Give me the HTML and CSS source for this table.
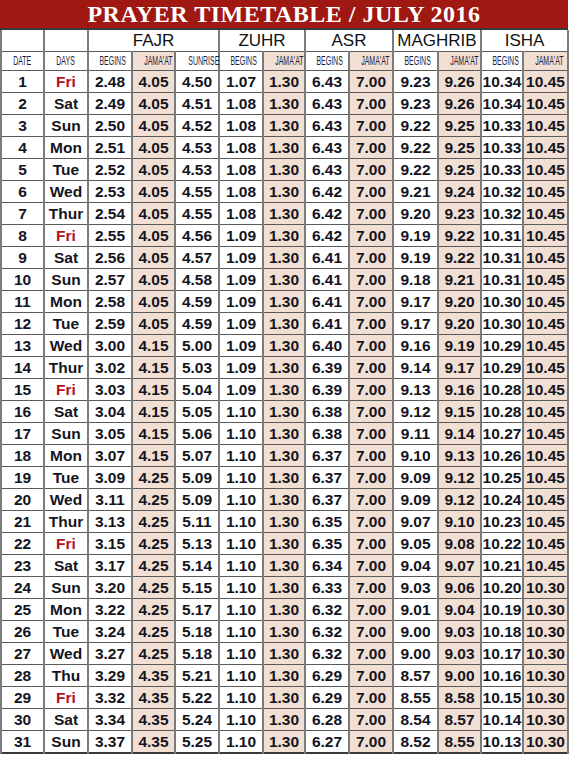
FILE: index.html
```html
<!DOCTYPE html>
<html lang="en">
<head>
<meta charset="utf-8">
<title>Prayer Timetable July 2016</title>
<link rel="stylesheet" href="styles.css">
</head>
<body>
<div class="sheet">
  <h1 class="title">PRAYER TIMETABLE / JULY 2016</h1>
  <table class="times">
    <colgroup>
      <col class="c43"><col class="c44"><col class="c44"><col class="c43"><col class="c44"><col class="c44"><col class="c42"><col class="c44"><col class="c44"><col class="c45"><col class="c43"><col class="c42"><col class="c45">
    </colgroup>
    <thead>
      <tr class="group">
        <th></th><th></th>
        <th colspan="3">FAJR</th>
        <th colspan="2">ZUHR</th>
        <th colspan="2">ASR</th>
        <th colspan="2">MAGHRIB</th>
        <th colspan="2">ISHA</th>
      </tr>
      <tr class="sub">
        <th><span>DATE</span></th>
        <th><span>DAYS</span></th>
        <th><span>BEGINS</span></th>
        <th class="j"><span>JAMA'AT</span></th>
        <th><span>SUNRISE</span></th>
        <th><span>BEGINS</span></th>
        <th class="j"><span>JAMA'AT</span></th>
        <th><span>BEGINS</span></th>
        <th class="j"><span>JAMA'AT</span></th>
        <th><span>BEGINS</span></th>
        <th class="j"><span>JAMA'AT</span></th>
        <th><span>BEGINS</span></th>
        <th class="j"><span>JAMA'AT</span></th>
      </tr>
    </thead>
    <tbody>
      <tr><td>1</td><td class="fri">Fri</td><td>2.48</td><td class="j">4.05</td><td>4.50</td><td>1.07</td><td class="j">1.30</td><td>6.43</td><td class="j">7.00</td><td>9.23</td><td class="j">9.26</td><td>10.34</td><td class="j">10.45</td></tr>
      <tr><td>2</td><td>Sat</td><td>2.49</td><td class="j">4.05</td><td>4.51</td><td>1.08</td><td class="j">1.30</td><td>6.43</td><td class="j">7.00</td><td>9.23</td><td class="j">9.26</td><td>10.34</td><td class="j">10.45</td></tr>
      <tr><td>3</td><td>Sun</td><td>2.50</td><td class="j">4.05</td><td>4.52</td><td>1.08</td><td class="j">1.30</td><td>6.43</td><td class="j">7.00</td><td>9.22</td><td class="j">9.25</td><td>10.33</td><td class="j">10.45</td></tr>
      <tr><td>4</td><td>Mon</td><td>2.51</td><td class="j">4.05</td><td>4.53</td><td>1.08</td><td class="j">1.30</td><td>6.43</td><td class="j">7.00</td><td>9.22</td><td class="j">9.25</td><td>10.33</td><td class="j">10.45</td></tr>
      <tr><td>5</td><td>Tue</td><td>2.52</td><td class="j">4.05</td><td>4.53</td><td>1.08</td><td class="j">1.30</td><td>6.43</td><td class="j">7.00</td><td>9.22</td><td class="j">9.25</td><td>10.33</td><td class="j">10.45</td></tr>
      <tr><td>6</td><td>Wed</td><td>2.53</td><td class="j">4.05</td><td>4.55</td><td>1.08</td><td class="j">1.30</td><td>6.42</td><td class="j">7.00</td><td>9.21</td><td class="j">9.24</td><td>10.32</td><td class="j">10.45</td></tr>
      <tr><td>7</td><td>Thur</td><td>2.54</td><td class="j">4.05</td><td>4.55</td><td>1.08</td><td class="j">1.30</td><td>6.42</td><td class="j">7.00</td><td>9.20</td><td class="j">9.23</td><td>10.32</td><td class="j">10.45</td></tr>
      <tr><td>8</td><td class="fri">Fri</td><td>2.55</td><td class="j">4.05</td><td>4.56</td><td>1.09</td><td class="j">1.30</td><td>6.42</td><td class="j">7.00</td><td>9.19</td><td class="j">9.22</td><td>10.31</td><td class="j">10.45</td></tr>
      <tr><td>9</td><td>Sat</td><td>2.56</td><td class="j">4.05</td><td>4.57</td><td>1.09</td><td class="j">1.30</td><td>6.41</td><td class="j">7.00</td><td>9.19</td><td class="j">9.22</td><td>10.31</td><td class="j">10.45</td></tr>
      <tr><td>10</td><td>Sun</td><td>2.57</td><td class="j">4.05</td><td>4.58</td><td>1.09</td><td class="j">1.30</td><td>6.41</td><td class="j">7.00</td><td>9.18</td><td class="j">9.21</td><td>10.31</td><td class="j">10.45</td></tr>
      <tr><td>11</td><td>Mon</td><td>2.58</td><td class="j">4.05</td><td>4.59</td><td>1.09</td><td class="j">1.30</td><td>6.41</td><td class="j">7.00</td><td>9.17</td><td class="j">9.20</td><td>10.30</td><td class="j">10.45</td></tr>
      <tr><td>12</td><td>Tue</td><td>2.59</td><td class="j">4.05</td><td>4.59</td><td>1.09</td><td class="j">1.30</td><td>6.41</td><td class="j">7.00</td><td>9.17</td><td class="j">9.20</td><td>10.30</td><td class="j">10.45</td></tr>
      <tr><td>13</td><td>Wed</td><td>3.00</td><td class="j">4.15</td><td>5.00</td><td>1.09</td><td class="j">1.30</td><td>6.40</td><td class="j">7.00</td><td>9.16</td><td class="j">9.19</td><td>10.29</td><td class="j">10.45</td></tr>
      <tr><td>14</td><td>Thur</td><td>3.02</td><td class="j">4.15</td><td>5.03</td><td>1.09</td><td class="j">1.30</td><td>6.39</td><td class="j">7.00</td><td>9.14</td><td class="j">9.17</td><td>10.29</td><td class="j">10.45</td></tr>
      <tr><td>15</td><td class="fri">Fri</td><td>3.03</td><td class="j">4.15</td><td>5.04</td><td>1.09</td><td class="j">1.30</td><td>6.39</td><td class="j">7.00</td><td>9.13</td><td class="j">9.16</td><td>10.28</td><td class="j">10.45</td></tr>
      <tr><td>16</td><td>Sat</td><td>3.04</td><td class="j">4.15</td><td>5.05</td><td>1.10</td><td class="j">1.30</td><td>6.38</td><td class="j">7.00</td><td>9.12</td><td class="j">9.15</td><td>10.28</td><td class="j">10.45</td></tr>
      <tr><td>17</td><td>Sun</td><td>3.05</td><td class="j">4.15</td><td>5.06</td><td>1.10</td><td class="j">1.30</td><td>6.38</td><td class="j">7.00</td><td>9.11</td><td class="j">9.14</td><td>10.27</td><td class="j">10.45</td></tr>
      <tr><td>18</td><td>Mon</td><td>3.07</td><td class="j">4.15</td><td>5.07</td><td>1.10</td><td class="j">1.30</td><td>6.37</td><td class="j">7.00</td><td>9.10</td><td class="j">9.13</td><td>10.26</td><td class="j">10.45</td></tr>
      <tr><td>19</td><td>Tue</td><td>3.09</td><td class="j">4.25</td><td>5.09</td><td>1.10</td><td class="j">1.30</td><td>6.37</td><td class="j">7.00</td><td>9.09</td><td class="j">9.12</td><td>10.25</td><td class="j">10.45</td></tr>
      <tr><td>20</td><td>Wed</td><td>3.11</td><td class="j">4.25</td><td>5.09</td><td>1.10</td><td class="j">1.30</td><td>6.37</td><td class="j">7.00</td><td>9.09</td><td class="j">9.12</td><td>10.24</td><td class="j">10.45</td></tr>
      <tr><td>21</td><td>Thur</td><td>3.13</td><td class="j">4.25</td><td>5.11</td><td>1.10</td><td class="j">1.30</td><td>6.35</td><td class="j">7.00</td><td>9.07</td><td class="j">9.10</td><td>10.23</td><td class="j">10.45</td></tr>
      <tr><td>22</td><td class="fri">Fri</td><td>3.15</td><td class="j">4.25</td><td>5.13</td><td>1.10</td><td class="j">1.30</td><td>6.35</td><td class="j">7.00</td><td>9.05</td><td class="j">9.08</td><td>10.22</td><td class="j">10.45</td></tr>
      <tr><td>23</td><td>Sat</td><td>3.17</td><td class="j">4.25</td><td>5.14</td><td>1.10</td><td class="j">1.30</td><td>6.34</td><td class="j">7.00</td><td>9.04</td><td class="j">9.07</td><td>10.21</td><td class="j">10.45</td></tr>
      <tr><td>24</td><td>Sun</td><td>3.20</td><td class="j">4.25</td><td>5.15</td><td>1.10</td><td class="j">1.30</td><td>6.33</td><td class="j">7.00</td><td>9.03</td><td class="j">9.06</td><td>10.20</td><td class="j">10.30</td></tr>
      <tr><td>25</td><td>Mon</td><td>3.22</td><td class="j">4.25</td><td>5.17</td><td>1.10</td><td class="j">1.30</td><td>6.32</td><td class="j">7.00</td><td>9.01</td><td class="j">9.04</td><td>10.19</td><td class="j">10.30</td></tr>
      <tr><td>26</td><td>Tue</td><td>3.24</td><td class="j">4.25</td><td>5.18</td><td>1.10</td><td class="j">1.30</td><td>6.32</td><td class="j">7.00</td><td>9.00</td><td class="j">9.03</td><td>10.18</td><td class="j">10.30</td></tr>
      <tr><td>27</td><td>Wed</td><td>3.27</td><td class="j">4.25</td><td>5.18</td><td>1.10</td><td class="j">1.30</td><td>6.32</td><td class="j">7.00</td><td>9.00</td><td class="j">9.03</td><td>10.17</td><td class="j">10.30</td></tr>
      <tr><td>28</td><td>Thu</td><td>3.29</td><td class="j">4.35</td><td>5.21</td><td>1.10</td><td class="j">1.30</td><td>6.29</td><td class="j">7.00</td><td>8.57</td><td class="j">9.00</td><td>10.16</td><td class="j">10.30</td></tr>
      <tr><td>29</td><td class="fri">Fri</td><td>3.32</td><td class="j">4.35</td><td>5.22</td><td>1.10</td><td class="j">1.30</td><td>6.29</td><td class="j">7.00</td><td>8.55</td><td class="j">8.58</td><td>10.15</td><td class="j">10.30</td></tr>
      <tr><td>30</td><td>Sat</td><td>3.34</td><td class="j">4.35</td><td>5.24</td><td>1.10</td><td class="j">1.30</td><td>6.28</td><td class="j">7.00</td><td>8.54</td><td class="j">8.57</td><td>10.14</td><td class="j">10.30</td></tr>
      <tr><td>31</td><td>Sun</td><td>3.37</td><td class="j">4.35</td><td>5.25</td><td>1.10</td><td class="j">1.30</td><td>6.27</td><td class="j">7.00</td><td>8.52</td><td class="j">8.55</td><td>10.13</td><td class="j">10.30</td></tr>
    </tbody>
  </table>
</div>
</body>
</html>
```
FILE: styles.css
```css
html, body {
  margin: 0;
  padding: 0;
  background: #ffffff;
}

.sheet {
  width: 568px;
}

.title {
  margin: 0;
  height: 28px;
  background: #a01812;
  color: #ffffff;
  font-family: "Liberation Serif", "Times New Roman", serif;
  font-weight: bold;
  font-size: 24px;
  letter-spacing: 0.5px;
  line-height: 29px;
  text-align: center;
  border-bottom: 2px solid #3a3a3a;
}

.times {
  width: 568px;
  table-layout: fixed;
  border-collapse: collapse;
  border: 2px solid #3a3a3a;
  border-top: none;
  font-family: "Liberation Sans", Arial, sans-serif;
  color: #14141e;
}

.c42 { width: 42px; }
.c43 { width: 43px; }
.c44 { width: 44px; }
.c45 { width: 45px; }

.times th,
.times td {
  padding: 0;
  text-align: center;
  border-left: 2px solid #7a7a7a;
  border-right: 2px solid #7a7a7a;
  border-top: 1px solid #5a5a5a;
  border-bottom: 1px solid #5a5a5a;
  white-space: nowrap;
  overflow: visible;
}

.group th {
  height: 21px;
  font-weight: normal;
  font-size: 17px;
  color: #111111;
  border-top: none;
}

.sub th {
  height: 18px;
  font-weight: normal;
  font-size: 12.5px;
  color: #1c1c3c;
  line-height: 14px;
}

.sub th span {
  display: inline-block;
  transform: scaleX(0.56);
  transform-origin: center;
}

.times td {
  height: 21px;
  font-weight: bold;
  font-size: 15.5px;
  line-height: 18px;
}

.times .j {
  background: #f2dfd4;
}

.times .fri {
  color: #b3111c;
}
```
